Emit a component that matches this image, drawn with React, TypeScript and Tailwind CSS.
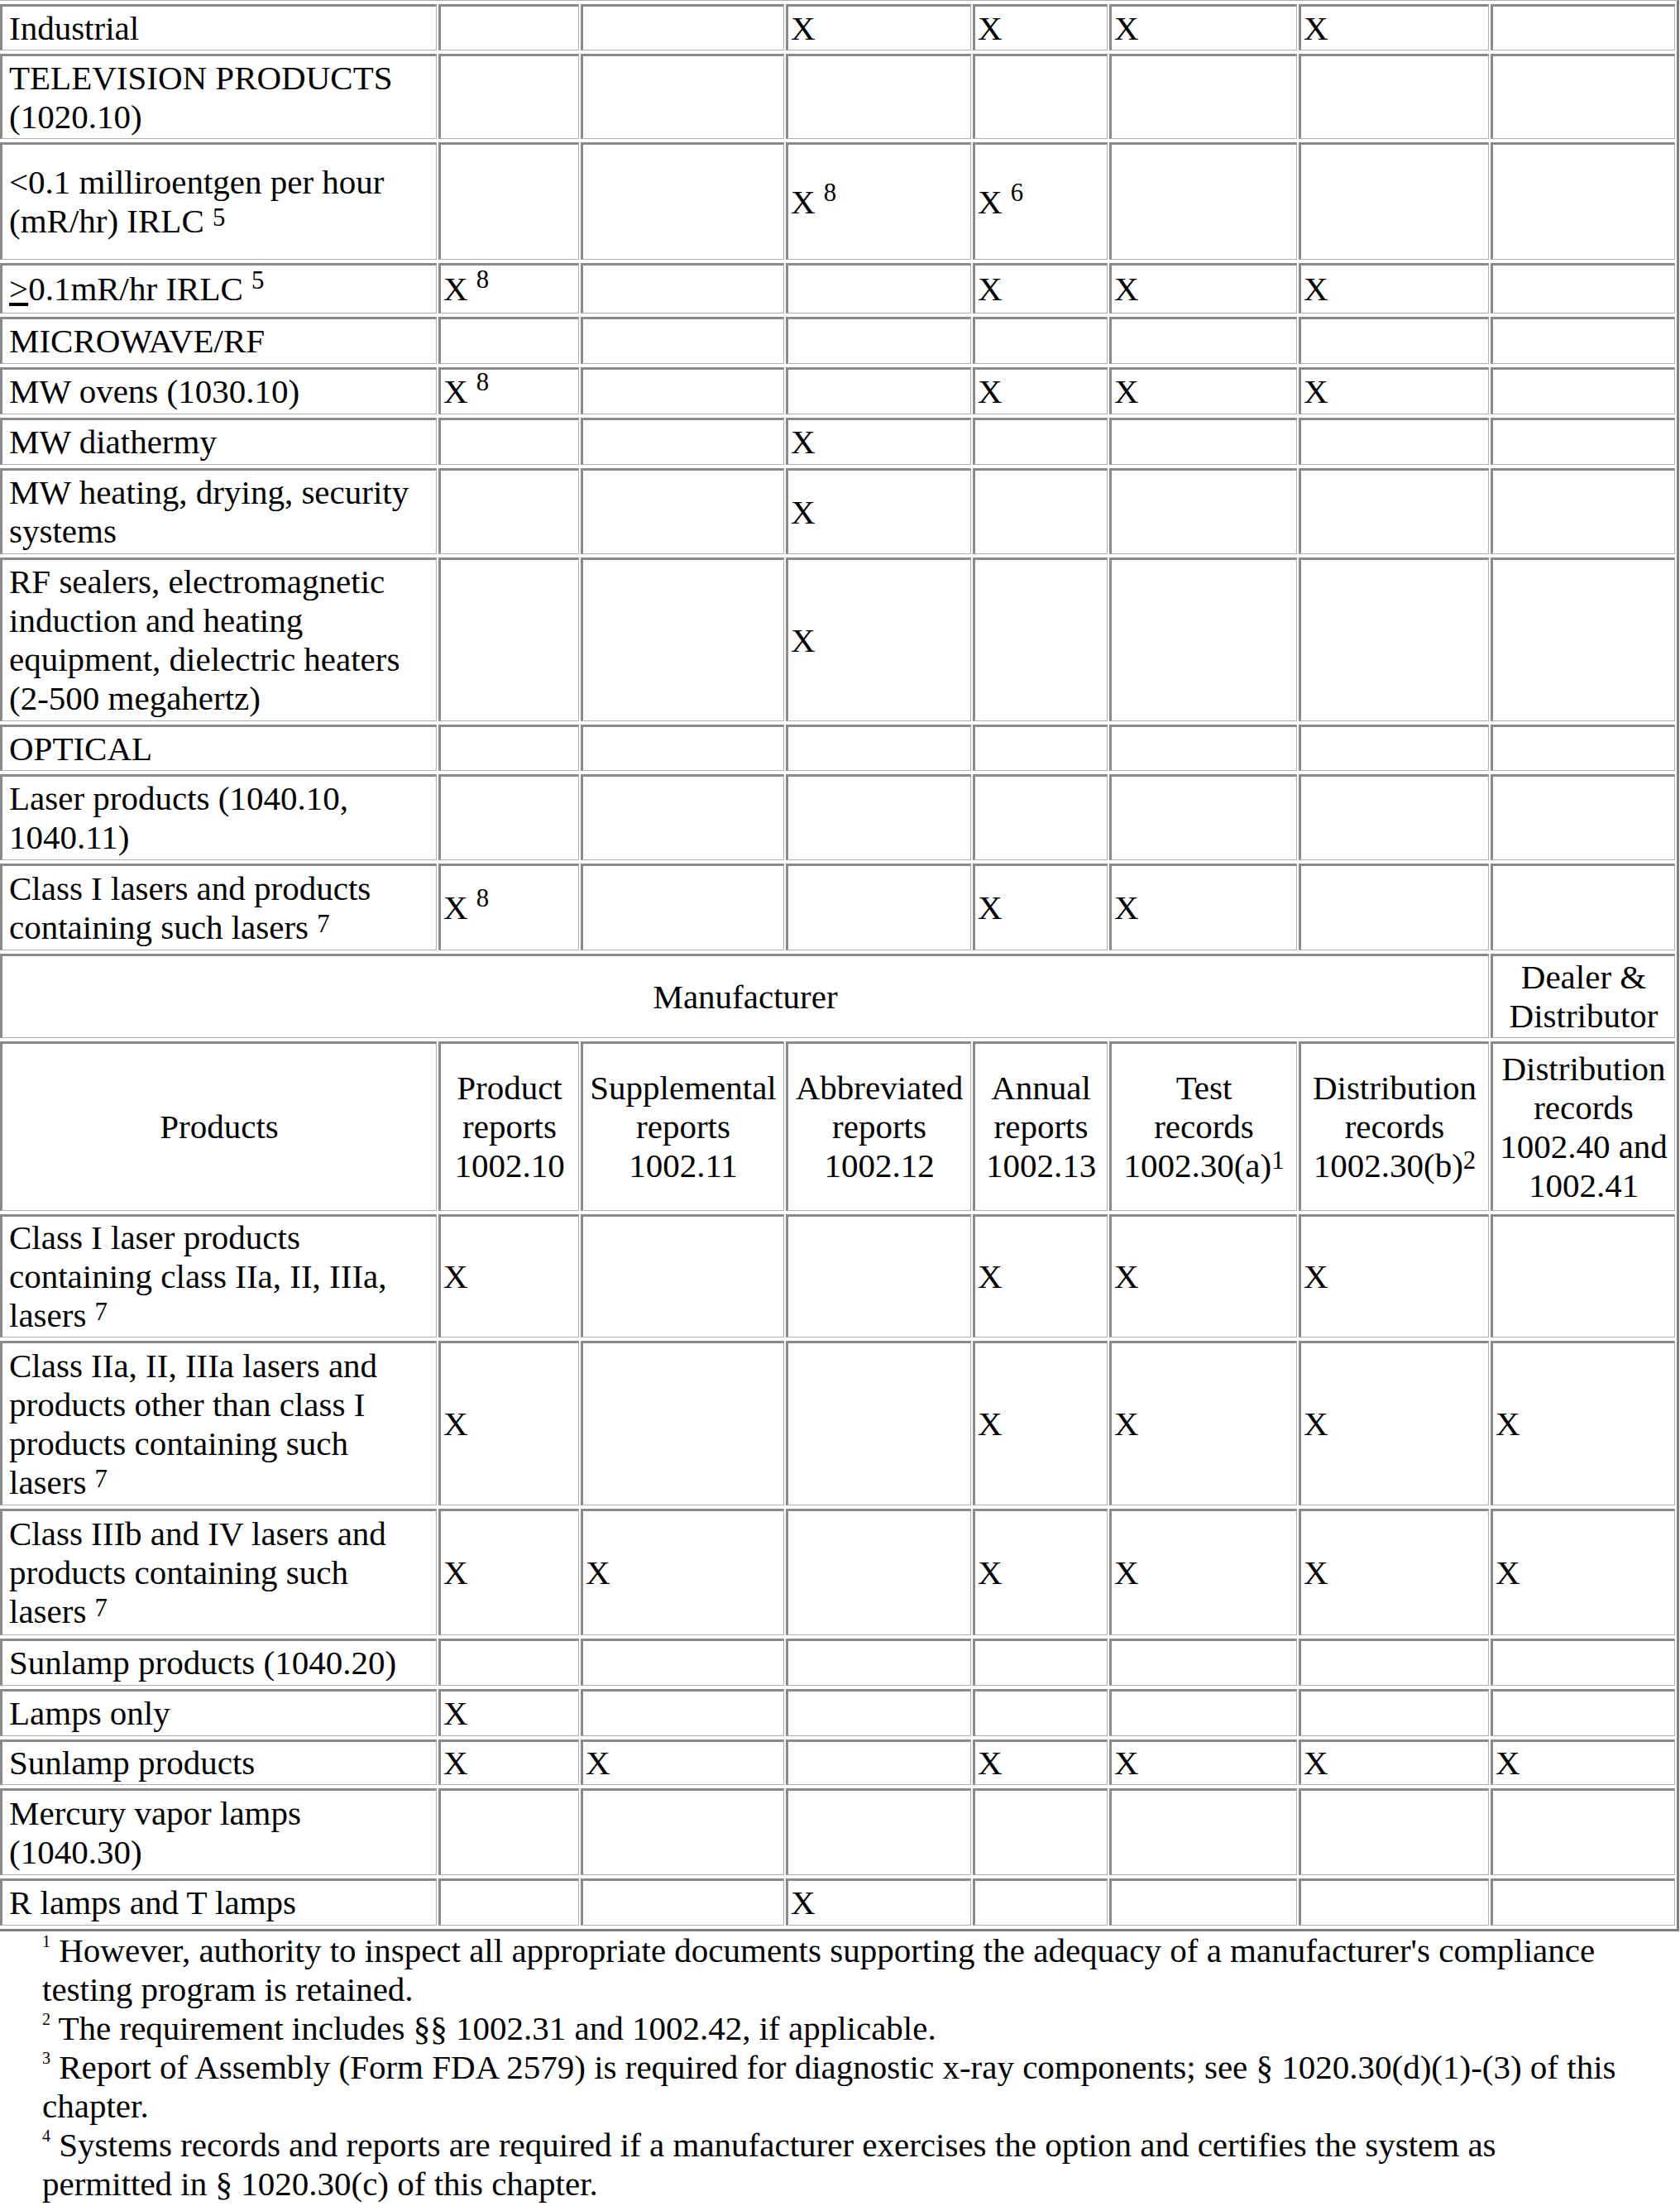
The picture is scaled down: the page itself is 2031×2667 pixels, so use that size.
import React from "react"

type Row = {
  label: React.ReactNode
  cells: React.ReactNode[]
  h: string
}

const cell =
  "border-l-[3px] border-t-[3px] border-r border-b border-l-[#8a8a8a] border-t-[#8a8a8a] border-r-[#b0b0b0] border-b-[#b0b0b0] px-[3px] py-[2px] align-middle"

const X8 = (
  <>
    X <sup className="-top-[15px]">8</sup>
  </>
)
const X6 = (
  <>
    X <sup className="-top-[15px]">6</sup>
  </>
)
const lasers7 = <sup className="-top-[8px]">7</sup>

const e = ""

// upper block: continuation of the table
const upper: Row[] = [
  { label: "Industrial", cells: [e, e, "X", "X", "X", "X", e], h: "h-[56px]" },
  { label: <>TELEVISION PRODUCTS<br />(1020.10)</>, cells: [e, e, e, e, e, e, e], h: "h-[103px]" },
  {
    label: (
      <>
        &lt;0.1 milliroentgen per hour<br />(mR/hr) IRLC <sup className="-top-[8px]">5</sup>
      </>
    ),
    cells: [e, e, X8, X6, e, e, e],
    h: "h-[142px]",
  },
  {
    label: (
      <>
        <u>&gt;</u>0.1mR/hr IRLC <sup className="-top-[14px]">5</sup>
      </>
    ),
    cells: [X8, e, e, "X", "X", "X", e],
    h: "h-[61px]",
  },
  { label: "MICROWAVE/RF", cells: [e, e, e, e, e, e, e], h: "h-[57px]" },
  { label: "MW ovens (1030.10)", cells: [X8, e, e, "X", "X", "X", e], h: "h-[57px]" },
  { label: "MW diathermy", cells: [e, e, "X", e, e, e, e], h: "h-[57px]" },
  { label: <>MW heating, drying, security<br />systems</>, cells: [e, e, "X", e, e, e, e], h: "h-[104px]" },
  {
    label: (
      <>
        RF sealers, electromagnetic<br />induction and heating<br />equipment, dielectric heaters<br />(2-500 megahertz)
      </>
    ),
    cells: [e, e, "X", e, e, e, e],
    h: "h-[198px]",
  },
  { label: "OPTICAL", cells: [e, e, e, e, e, e, e], h: "h-[56px]" },
  { label: <>Laser products (1040.10,<br />1040.11)</>, cells: [e, e, e, e, e, e, e], h: "h-[104px]" },
  {
    label: <>Class I lasers and products<br />containing such lasers {lasers7}</>,
    cells: [X8, e, e, "X", "X", e, e],
    h: "h-[105px]",
  },
]

const lower: Row[] = [
  {
    label: <>Class I laser products<br />containing class IIa, II, IIIa,<br />lasers {lasers7}</>,
    cells: ["X", e, e, "X", "X", "X", e],
    h: "h-[149px]",
  },
  {
    label: (
      <>
        Class IIa, II, IIIa lasers and<br />products other than class I<br />products containing such<br />lasers {lasers7}
      </>
    ),
    cells: ["X", e, e, "X", "X", "X", "X"],
    h: "h-[199px]",
  },
  {
    label: <>Class IIIb and IV lasers and<br />products containing such<br />lasers {lasers7}</>,
    cells: ["X", "X", e, "X", "X", "X", "X"],
    h: "h-[153px]",
  },
  { label: "Sunlamp products (1040.20)", cells: [e, e, e, e, e, e, e], h: "h-[57px]" },
  { label: "Lamps only", cells: ["X", e, e, e, e, e, e], h: "h-[57px]" },
  { label: "Sunlamp products", cells: ["X", "X", e, "X", "X", "X", "X"], h: "h-[55px]" },
  { label: <>Mercury vapor lamps<br />(1040.30)</>, cells: [e, e, e, e, e, e, e], h: "h-[105px]" },
  { label: "R lamps and T lamps", cells: [e, e, "X", e, e, e, e], h: "h-[57px]" },
]

const headers: React.ReactNode[] = [
  <>Product<br />reports<br />1002.10</>,
  <>Supplemental<br />reports<br />1002.11</>,
  <>Abbreviated<br />reports<br />1002.12</>,
  <>Annual<br />reports<br />1002.13</>,
  <>Test<br />records<br />1002.30(a)<sup className="-top-[10px]">1</sup></>,
  <>Distribution<br />records<br />1002.30(b)<sup className="-top-[10px]">2</sup></>,
  <>Distribution<br />records<br />1002.40 and<br />1002.41</>,
]

const footnotes: { n: string; text: string }[] = [
  {
    n: "1",
    text: "However, authority to inspect all appropriate documents supporting the adequacy of a manufacturer's compliance testing program is retained.",
  },
  { n: "2", text: "The requirement includes §§ 1002.31 and 1002.42, if applicable." },
  {
    n: "3",
    text: "Report of Assembly (Form FDA 2579) is required for diagnostic x-ray components; see § 1020.30(d)(1)-(3) of this chapter.",
  },
  {
    n: "4",
    text: "Systems records and reports are required if a manufacturer exercises the option and certifies the system as permitted in § 1020.30(c) of this chapter.",
  },
]

function BodyRow({ row }: { row: Row }) {
  return (
    <tr className={row.h}>
      <td className={cell + " pl-[8px]"}>{row.label}</td>
      {row.cells.map((c, i) => (
        <td key={i} className={cell}>
          {c}
        </td>
      ))}
    </tr>
  )
}

export default function App() {
  return (
    <div className="w-[2031px] overflow-hidden bg-white text-black [font-family:'Liberation_Serif','Times_New_Roman',serif] text-[41px] leading-[47px]">
      <table className="-ml-[3px] w-[2033px] table-fixed border-separate border-spacing-x-[2px] border-spacing-y-[4px] border-t border-l border-r-[3px] border-b-[3px] border-t-[#b0b0b0] border-l-[#b0b0b0] border-r-[#808080] border-b-[#808080]">
        <colgroup>
          <col className="w-[528px]" />
          <col className="w-[170px]" />
          <col className="w-[246px]" />
          <col className="w-[224px]" />
          <col className="w-[163px]" />
          <col className="w-[227px]" />
          <col className="w-[230px]" />
          <col className="w-[223px]" />
        </colgroup>
        <tbody>
          {upper.map((r, i) => (
            <BodyRow key={"u" + i} row={r} />
          ))}

          <tr className="h-[102px]">
            <td colSpan={7} className={cell + " text-center"}>
              Manufacturer
            </td>
            <td className={cell + " text-center"}>
              Dealer &amp;
              <br />
              Distributor
            </td>
          </tr>

          <tr className="h-[205px]">
            <td className={cell + " text-center"}>Products</td>
            {headers.map((h, i) => (
              <td key={i} className={cell + " text-center"}>
                {h}
              </td>
            ))}
          </tr>

          {lower.map((r, i) => (
            <BodyRow key={"l" + i} row={r} />
          ))}
        </tbody>
      </table>

      <div className="pl-[51px] pr-[70px]">
        {footnotes.map((f) => (
          <div key={f.n}>
            <sup className="text-[20px] -top-[18px]">{f.n}</sup> {f.text}
          </div>
        ))}
      </div>
    </div>
  )
}
